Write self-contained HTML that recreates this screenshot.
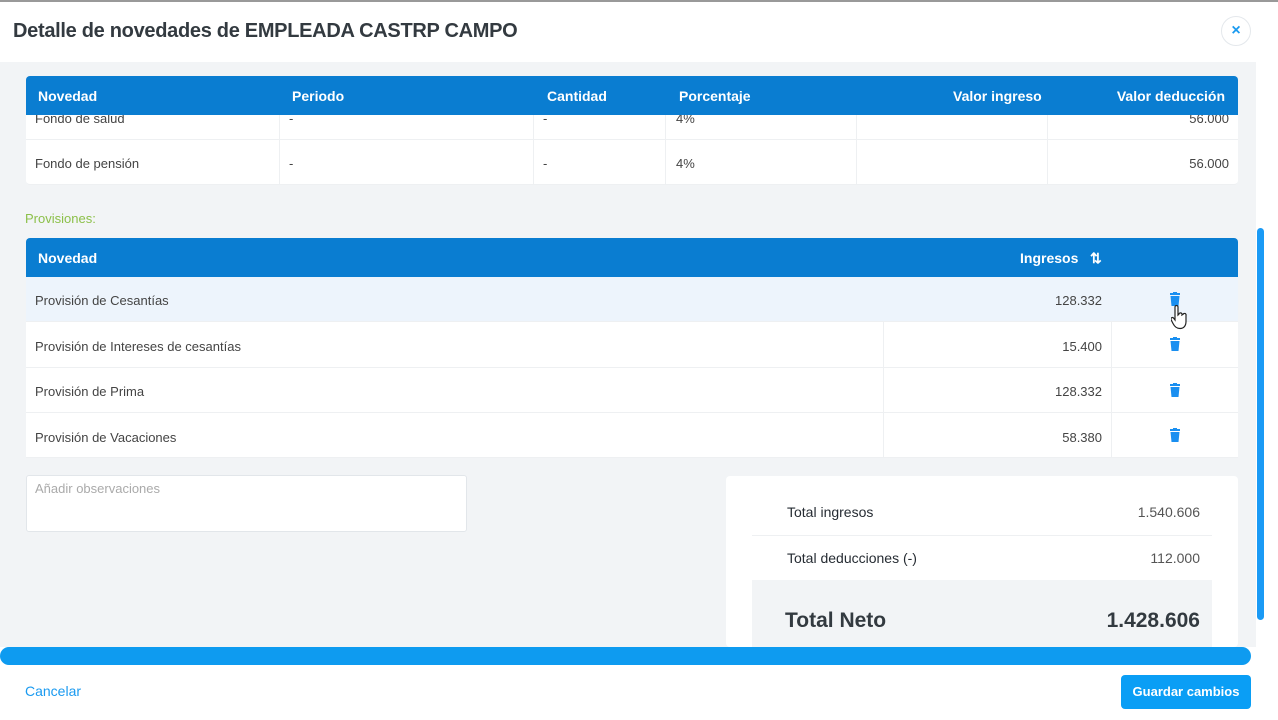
<!DOCTYPE html>
<html><head><meta charset="utf-8"><style>
*{box-sizing:border-box;margin:0;padding:0}
body{width:1278px;height:720px;overflow:hidden;background:#fff;font-family:"Liberation Sans",sans-serif;color:#444;position:relative;font-size:13px}
.abs{position:absolute}
.hdr{left:0;top:0;width:1278px;height:62px;background:#fff;border-top:2px solid #999}
.title{left:13px;top:20px;font-size:20px;font-weight:bold;color:#333a40;letter-spacing:-0.3px}
.close{left:1221px;top:16px;width:30px;height:30px;border-radius:50%;border:1px solid #e4e8ec;color:#1a9af0;font-weight:bold;font-size:16px;text-align:center;line-height:28px}
.body{left:0;top:62px;width:1256px;height:585px;background:#f2f4f6}
.th{background:#0a7dd1;color:#fff;font-weight:bold;font-size:14px}
.txt{position:absolute;white-space:nowrap}
.row{background:#fff;border-bottom:1px solid #eef0f2}
.vl{position:absolute;top:0;bottom:0;width:1px;background:#eef0f2}
</style></head><body>
<div class="abs hdr"></div>
<div class="abs title">Detalle de novedades de EMPLEADA CASTRP CAMPO</div>
<div class="abs close">×</div>
<div class="abs body"></div>

<div class="abs row" style="left:26px;top:110px;width:1212px;height:30px;overflow:hidden">
<span class="txt" style="left:9px;top:1px">Fondo de salud</span><span class="txt" style="left:263px;top:1px">-</span><span class="txt" style="left:517px;top:1px">-</span><span class="txt" style="left:650px;top:1px">4%</span><span class="txt" style="right:9px;top:1px">56.000</span>
<div class="vl" style="left:253px"></div><div class="vl" style="left:507px"></div><div class="vl" style="left:639px"></div><div class="vl" style="left:830px"></div><div class="vl" style="left:1021px"></div></div>
<div class="abs row" style="left:26px;top:140px;width:1212px;height:45px;border-radius:0 0 4px 4px">
<span class="txt" style="left:9px;top:16px">Fondo de pensión</span><span class="txt" style="left:263px;top:16px">-</span><span class="txt" style="left:517px;top:16px">-</span><span class="txt" style="left:650px;top:16px">4%</span><span class="txt" style="right:9px;top:16px">56.000</span>
<div class="vl" style="left:253px"></div><div class="vl" style="left:507px"></div><div class="vl" style="left:639px"></div><div class="vl" style="left:830px"></div><div class="vl" style="left:1021px"></div></div>
<div class="abs th" style="left:26px;top:76px;width:1212px;height:39px;border-radius:4px 4px 0 0">
<span class="txt" style="left:12px;top:12px">Novedad</span><span class="txt" style="left:266px;top:12px">Periodo</span><span class="txt" style="left:521px;top:12px">Cantidad</span><span class="txt" style="left:653px;top:12px">Porcentaje</span><span class="txt" style="left:927px;top:12px">Valor ingreso</span><span class="txt" style="right:13px;top:12px">Valor deducción</span></div>

<div class="abs" style="left:25px;top:211px;color:#8cc04a;font-size:13px">Provisiones:</div>

<div class="abs th" style="left:26px;top:238px;width:1212px;height:39px;border-radius:4px 4px 0 0">
<span class="txt" style="left:12px;top:12px">Novedad</span><span class="txt" style="left:994px;top:12px">Ingresos&nbsp;&nbsp; ⇅</span></div>
<div class="abs row" style="left:26px;top:277px;width:1212px;height:45px;background:#edf4fc"><span class="txt" style="left:9px;top:16px">Provisión de Cesantías</span><span class="txt" style="right:136px;top:16px">128.332</span></div>
<div class="abs row" style="left:26px;top:322px;width:1212px;height:46px"><span class="txt" style="left:9px;top:17px">Provisión de Intereses de cesantías</span><span class="txt" style="right:136px;top:17px">15.400</span><div class="vl" style="left:857px"></div><div class="vl" style="left:1085px"></div></div>
<div class="abs row" style="left:26px;top:368px;width:1212px;height:45px"><span class="txt" style="left:9px;top:16px">Provisión de Prima</span><span class="txt" style="right:136px;top:16px">128.332</span><div class="vl" style="left:857px"></div><div class="vl" style="left:1085px"></div></div>
<div class="abs row" style="left:26px;top:413px;width:1212px;height:45px"><span class="txt" style="left:9px;top:17px">Provisión de Vacaciones</span><span class="txt" style="right:136px;top:17px">58.380</span><div class="vl" style="left:857px"></div><div class="vl" style="left:1085px"></div></div>
<svg class="abs" style="left:1169px;top:292px" width="12" height="160" viewBox="0 0 12 160">
<g fill="#1a8ff0"><path d="M1 1h10v2H1zM4 0h4v1H4zM1.5 4h9l-1 10h-7z"/>
<path transform="translate(0,45)" d="M1 1h10v2H1zM4 0h4v1H4zM1.5 4h9l-1 10h-7z"/>
<path transform="translate(0,91)" d="M1 1h10v2H1zM4 0h4v1H4zM1.5 4h9l-1 10h-7z"/>
<path transform="translate(0,136)" d="M1 1h10v2H1zM4 0h4v1H4zM1.5 4h9l-1 10h-7z"/></g></svg>
<svg class="abs" style="left:1171px;top:305px" width="16" height="26" viewBox="0 0 16 26"><path d="M4 2a1.5 1.5 0 013 0v8l1-1a1.5 1.5 0 013 1l1-.5a1.5 1.5 0 013 1v6c0 4-2 7-6 7s-6-3-7-5l-2-4a1.5 1.5 0 012.5-1.5L4 15z" fill="#fff" stroke="#222" stroke-width="1.2"/></svg>

<div class="abs" style="left:26px;top:475px;width:441px;height:57px;background:#fff;border:1px solid #e2e6ea;border-radius:3px;color:#aaa;padding:5px 8px">Añadir observaciones</div>

<div class="abs" style="left:726px;top:476px;width:512px;height:171px;background:#fff;border-radius:4px"></div>
<div class="abs" style="left:787px;top:504px;font-size:14px;color:#262c33">Total ingresos</div>
<div class="abs" style="right:78px;top:504px;font-size:14px;color:#555">1.540.606</div>
<div class="abs" style="left:752px;top:535px;width:460px;height:1px;background:#eef0f2"></div>
<div class="abs" style="left:787px;top:550px;font-size:14px;color:#262c33">Total deducciones (-)</div>
<div class="abs" style="right:78px;top:550px;font-size:14px;color:#555">112.000</div>
<div class="abs" style="left:752px;top:580px;width:460px;height:67px;background:#f2f4f6"></div>
<div class="abs" style="left:785px;top:609px;font-size:21px;font-weight:bold;color:#333a40">Total Neto</div>
<div class="abs" style="right:78px;top:609px;font-size:21px;font-weight:bold;color:#333a40">1.428.606</div>

<div class="abs" style="left:1257px;top:228px;width:7px;height:392px;background:#1a9af5;border-radius:4px"></div>
<div class="abs" style="left:0;top:647px;width:1251px;height:18px;background:#0e9bf0;border-radius:9px"></div>
<div class="abs" style="left:25px;top:683px;color:#1a9af0;font-size:14px">Cancelar</div>
<div class="abs" style="left:1121px;top:675px;width:130px;height:34px;background:#0a9ef5;border-radius:4px;color:#fff;font-weight:bold;font-size:13px;text-align:center;line-height:34px">Guardar cambios</div>
</body></html>
